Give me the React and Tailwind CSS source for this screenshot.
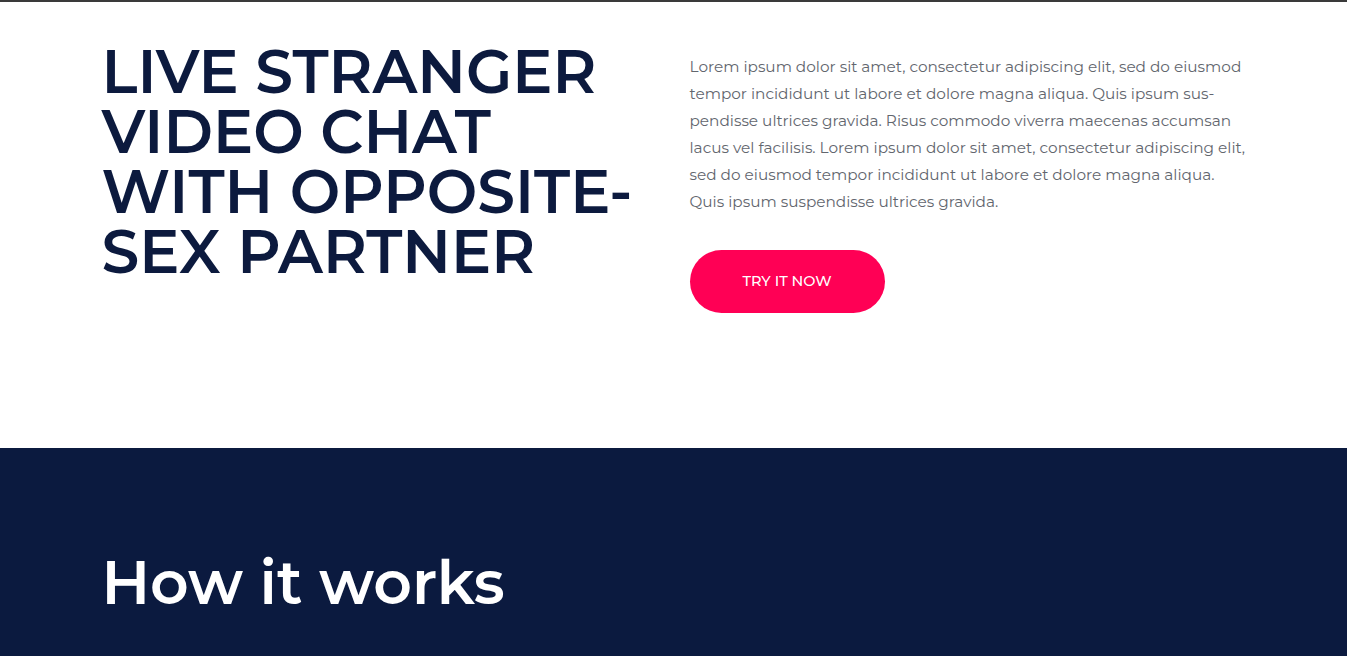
import React from "react";

const font = { fontFamily: '"Montserrat", "Noto Sans", "Open Sans", sans-serif' };

const paragraphLines = [
  "Lorem ipsum dolor sit amet, consectetur adipiscing elit, sed do eiusmod",
  "tempor incididunt ut labore et dolore magna aliqua. Quis ipsum sus-",
  "pendisse ultrices gravida. Risus commodo viverra maecenas accumsan",
  "lacus vel facilisis. Lorem ipsum dolor sit amet, consectetur adipiscing elit,",
  "sed do eiusmod tempor incididunt ut labore et dolore magna aliqua.",
  "Quis ipsum suspendisse ultrices gravida.",
];

export default function App() {
  return (
    <div className="min-h-screen bg-white" style={font}>
      {/* Hero */}
      <section className="border-t-2 border-[#3a3a3a] bg-white h-[448px]">
        <div className="max-w-[1170px] mx-auto px-[15px] grid grid-cols-2 pt-[40px]">
          <div className="pr-[15px]">
            <h1 className="text-[60px] leading-[60px] font-semibold text-[#0c1a3e] uppercase -ml-[2px]">
              <span className="block">Live stranger</span>
              <span className="block">video chat</span>
              <span className="block">with opposite-</span>
              <span className="block">sex partner</span>
            </h1>
          </div>
          <div className="pl-[16px] pt-[11px]">
            <p className="text-[15.3px] leading-[27px] text-[#62666e]">
              {paragraphLines.map((line) => (
                <span key={line} className="block whitespace-nowrap">
                  {line}
                </span>
              ))}
            </p>
            <button className="mt-[35px] w-[195px] h-[63px] rounded-full bg-[#ff0055] text-white text-[14.5px] font-medium uppercase">
              Try it now
            </button>
          </div>
        </div>
      </section>

      {/* How it works */}
      <section className="bg-[#0b1a3f] h-[208px]">
        <div className="max-w-[1170px] mx-auto px-[15px] pt-[100px]">
          <h2 className="text-[60px] leading-[70px] font-semibold text-white -ml-[2px]">How it works</h2>
        </div>
      </section>
    </div>
  );
}
